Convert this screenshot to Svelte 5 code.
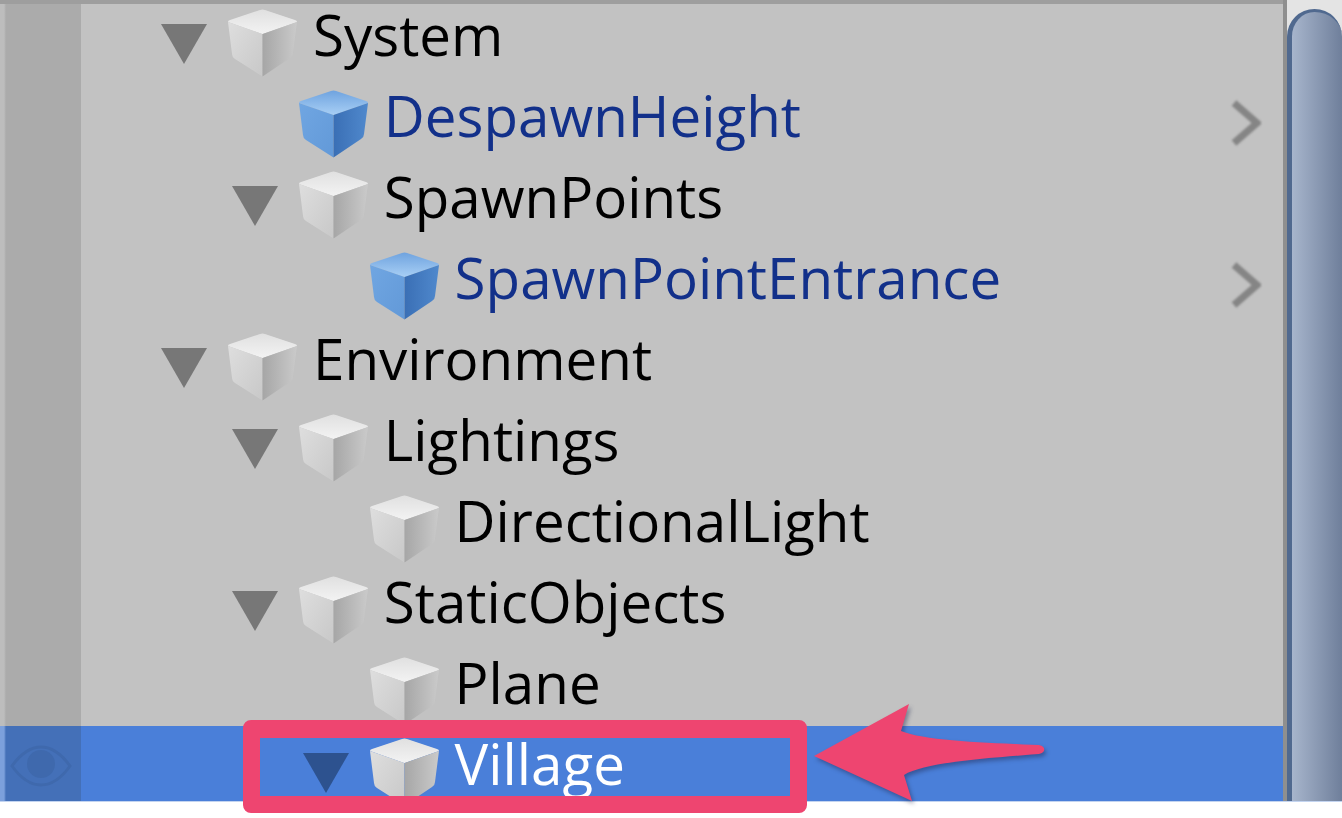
<script>
	const rows = [
		{ name: 'System', depth: 0, open: true },
		{ name: 'DespawnHeight', depth: 1, prefab: true },
		{ name: 'SpawnPoints', depth: 1, open: true },
		{ name: 'SpawnPointEntrance', depth: 2, prefab: true },
		{ name: 'Environment', depth: 0, open: true },
		{ name: 'Lightings', depth: 1, open: true },
		{ name: 'DirectionalLight', depth: 2 },
		{ name: 'StaticObjects', depth: 1, open: true },
		{ name: 'Plane', depth: 2 },
		{ name: 'Village', depth: 2, open: true, selected: true }
	];
</script>

{#snippet cube(kind)}
	<svg class="cube" width="71" height="68" viewBox="0 0 71 68">
		<path d="M1 13 Q1 11.500 3 11 L33 1 Q35.500 0 38 1 L68 11 Q70 11.500 70 13 L36 25 Q35.500 25.200 35 25 Z" fill="url(#{kind}-top)" />
		<path d="M1 13 L35.500 25 L35.500 67.500 L8 50 Q5 48 5 45 Z" fill="url(#{kind}-left)" />
		<path d="M35.500 25 L70 13 L66 44 Q66 47 63 49 L35.500 67.500 Z" fill="url(#{kind}-right)" />
	</svg>
{/snippet}

<svg class="defs" width="0" height="0" aria-hidden="true">
	<defs>
		<linearGradient id="grey-top" x1="0" y1="0" x2="0" y2="1">
			<stop offset="0" stop-color="#e0e0e0" />
			<stop offset="1" stop-color="#f3f3f3" />
		</linearGradient>
		<linearGradient id="grey-left" x1="0" y1="0" x2="1" y2="1">
			<stop offset="0" stop-color="#dedede" />
			<stop offset="1" stop-color="#c8c8c8" />
		</linearGradient>
		<linearGradient id="grey-right" x1="0" y1="0.4" x2="1" y2="0.4">
			<stop offset="0" stop-color="#a6a6a6" />
			<stop offset="1" stop-color="#cacaca" />
		</linearGradient>
		<linearGradient id="blue-top" x1="0" y1="0" x2="0" y2="1">
			<stop offset="0" stop-color="#6fa3df" />
			<stop offset="1" stop-color="#a8cff5" />
		</linearGradient>
		<linearGradient id="blue-left" x1="0" y1="0" x2="1" y2="1">
			<stop offset="0" stop-color="#70a6e2" />
			<stop offset="1" stop-color="#6299d8" />
		</linearGradient>
		<linearGradient id="blue-right" x1="0" y1="0.4" x2="1" y2="0.4">
			<stop offset="0" stop-color="#3a6fb5" />
			<stop offset="1" stop-color="#5089cd" />
		</linearGradient>
	</defs>
</svg>

<div class="page">
	<div class="panel">
		<div class="topline"></div>
		<div class="body">
			<div class="tree">
				{#each rows as row}
					<div class="row" class:selected={row.selected}>
						<div class="gutter">
							{#if row.selected}
								<svg class="eye" width="62" height="42" viewBox="0 0 62 42" fill="none">
									<path d="M2 21 C12 7 22 2 31 2 C40 2 50 7 60 21 C50 35 40 40 31 40 C22 40 12 35 2 21 Z" stroke="#3f69ad" stroke-width="3" />
									<circle cx="31" cy="19" r="14" fill="#3f69ad" />
								</svg>
							{/if}
						</div>
						<div class="content" style="padding-left: {80 + row.depth * 70.8}px">
							<div class="toggle">
								{#if row.open}
									<svg width="46" height="40" viewBox="0 0 46 40">
										<path d="M0 0 H46 L23 40 Z" fill={row.selected ? '#2d528f' : '#777777'} />
									</svg>
								{/if}
							</div>
							{@render cube(row.prefab ? 'blue' : 'grey')}
							<span class="label" class:prefab={row.prefab}>{row.name}</span>
							{#if row.prefab}
								<svg class="chevron" width="30" height="46" viewBox="0 0 30 46" fill="none">
									<path d="M3 3 L26 23 L3 43" stroke="#858585" stroke-width="7" />
								</svg>
							{/if}
						</div>
					</div>
				{/each}
			</div>
			<div class="scrollbar">
				<div class="thumb"></div>
			</div>
		</div>
	</div>

	<div class="frame"></div>
	<svg class="arrow" width="250" height="110" viewBox="805 700 250 110">
		<path
			d="M814 756 L909 704 L901 731 C925 741 990 743 1039 745 C1046 746 1046 753 1039 754 C990 758 925 762 904 775 L912 801 Z"
			fill="#ee4570"
		/>
	</svg>
</div>

<style>
	:global(body) {
		background: #fff;
	}

	.defs {
		position: absolute;
	}

	.page {
		position: relative;
		width: 1342px;
		height: 818px;
		overflow: hidden;
		background: #fff;
		font-family: 'Open Sans', 'DejaVu Sans', sans-serif;
	}

	.panel {
		height: 802px;
		box-sizing: border-box;
		border-bottom: 1px solid #c3d4f0;
		display: flex;
		flex-direction: column;
		overflow: hidden;
	}

	.topline {
		height: 4px;
		flex-shrink: 0;
		background: #9e9e9e;
		position: relative;
		z-index: 1;
		margin-right: 59px;
	}

	.body {
		flex: 1;
		min-height: 0;
		display: flex;
	}

	.tree {
		flex: 1;
		min-width: 0;
		margin-top: -7px;
	}

	/* rows are taller than the last visible one, it gets cut by the panel */
	.row {
		height: 81px;
		display: flex;
		background: #c2c2c2;
	}

	.row.selected {
		background: #4a7fd9;
	}

	.gutter {
		width: 81px;
		flex-shrink: 0;
		background: linear-gradient(to right, #bdbdbd 0, #bdbdbd 4px, #ababab 6px);
		display: flex;
		align-items: flex-start;
		justify-content: center;
	}

	.selected .gutter {
		background: linear-gradient(to right, #7ca0dc 0, #7ca0dc 4px, #4470b8 6px);
	}

	.eye {
		margin-top: 19px;
		margin-left: 1px;
		filter: blur(0.6px);
	}

	.content {
		flex: 1;
		min-width: 0;
		display: flex;
		align-items: flex-start;
		padding-top: 12px;
		padding-right: 22px;
		box-sizing: border-box;
	}

	.toggle {
		width: 66px;
		flex-shrink: 0;
		padding-top: 15px;
		filter: blur(0.6px);
	}

	.cube {
		flex-shrink: 0;
		filter: blur(0.7px);
	}

	.label {
		margin-left: 15px;
		margin-top: -10px;
		font-size: 56.5px;
		line-height: 72px;
		color: #000;
		white-space: nowrap;
		filter: blur(0.6px);
	}

	.label.prefab {
		color: #12308a;
	}

	.selected .label {
		color: #fff;
	}

	.chevron {
		margin-left: auto;
		margin-top: 10px;
		filter: blur(0.8px);
	}

	.scrollbar {
		width: 59px;
		flex-shrink: 0;
		margin-top: -4px;
		box-sizing: border-box;
		border-left: 4px solid #8f8f8f;
		background: #e4e4e4;
		padding-top: 9px;
	}

	.thumb {
		height: 100%;
		border-radius: 30px 30px 0 0;
		border-left: 5px solid #50698f;
		border-top: 3px solid #50698f;
		box-sizing: border-box;
		background: linear-gradient(to right, #a7b5cc, #6f7f9b);
	}

	.frame {
		position: absolute;
		left: 243px;
		top: 720px;
		width: 564px;
		height: 93px;
		box-sizing: border-box;
		border: solid #ee4570;
		border-width: 18px 17px 17px 17px;
		border-radius: 8px;
	}

	.arrow {
		position: absolute;
		left: 805px;
		top: 700px;
		filter: drop-shadow(2px 3px 2px rgba(30, 40, 80, 0.45));
	}
</style>
